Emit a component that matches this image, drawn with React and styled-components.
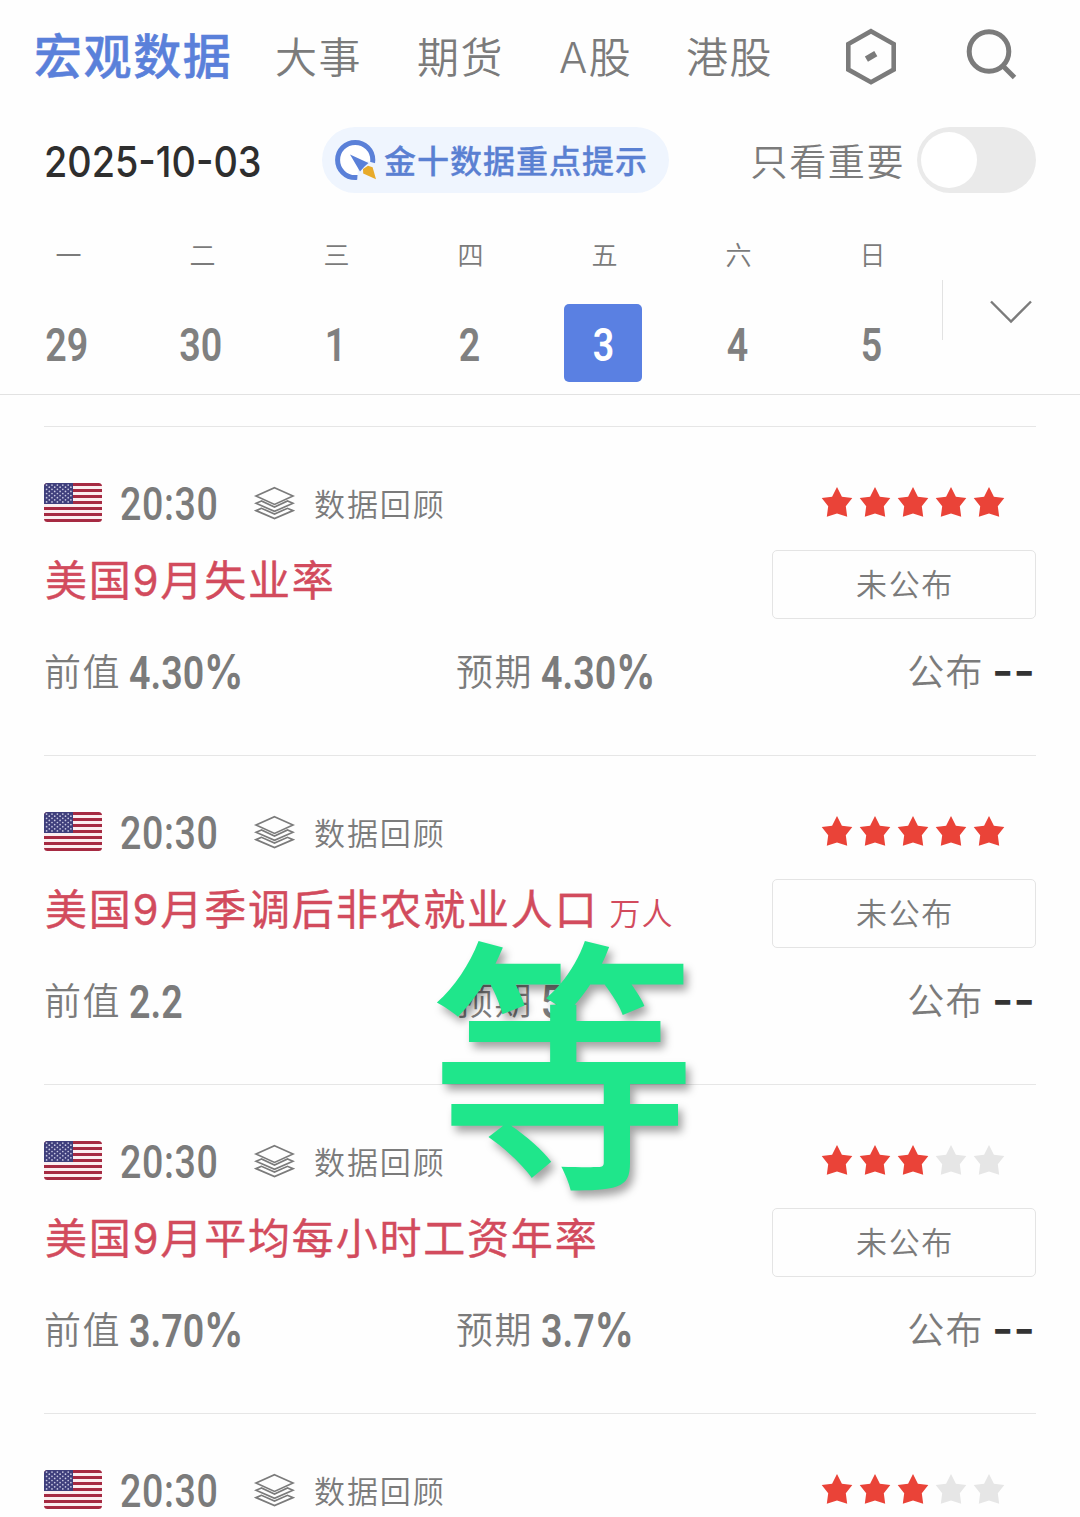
import { useState } from 'react';
import styled, { createGlobalStyle } from 'styled-components';

const GlobalStyle = createGlobalStyle`
  * {
    box-sizing: border-box;
  }

  body {
    margin: 0;
    background: #fefefe;
    color: #7b7b7b;
    font-family: 'Noto Sans CJK SC', sans-serif;
    overflow: hidden;
  }

  button {
    padding: 0;
    border: none;
    background: none;
    color: inherit;
    font-family: inherit;
    cursor: pointer;
  }

  svg {
    display: block;
    flex: none;
  }
`;

// Styled Components
const Screen = styled.div`
  position: relative;
  width: 1080px;
  height: 1517px;
  overflow: hidden;
`;

const Header = styled.header`
  height: 395px;
  border-bottom: 1px solid #e2e2e2;
`;

const TabBar = styled.nav`
  display: flex;
  align-items: center;
  height: 112px;
  padding-left: 34px;
`;

const Tab = styled.button`
  width: ${({ $width }) => $width}px;
  height: 66px;
  flex: none;
  padding-top: ${({ $active }) => ($active ? 2 : 4)}px;
  text-align: left;
  white-space: nowrap;
  font-family: Inter, 'Noto Sans CJK SC', sans-serif;
  line-height: 62px;
  font-size: ${({ $active }) => ($active ? 48 : 42)}px;
  font-weight: ${({ $active }) => ($active ? 500 : 350)};
  letter-spacing: ${({ $active }) => ($active ? 1.6 : 1.4)}px;
  color: ${({ $active }) => ($active ? '#5a80da' : '#7b7b7b')};
  -webkit-text-stroke: ${({ $active }) => ($active ? 0.5 : 0)}px;
`;

const IconButton = styled.button`
  width: 60px;
  height: 64px;
  margin-left: ${({ $gap }) => $gap}px;
`;

const FilterBar = styled.div`
  display: flex;
  align-items: center;
  height: 66px;
  margin-top: 15px;
  padding: 0 44px;
`;

const DateText = styled.div`
  width: 278px;
  padding-top: 3px;
  font-family: Inter, sans-serif;
  font-size: 42px;
  font-weight: 500;
  line-height: 66px;
  color: #2e2e2e;
  white-space: nowrap;
  transform: scaleX(0.9);
  transform-origin: left;
`;

const TipPill = styled.button`
  display: flex;
  align-items: center;
  gap: 6px;
  width: 347px;
  height: 66px;
  padding-left: 12px;
  border-radius: 33px;
  background: #eff5fe;
  color: #5a80d2;
  font-size: 32px;
  font-weight: 500;
  line-height: 64px;
  letter-spacing: 1px;
  white-space: nowrap;
  -webkit-text-stroke: 0.3px;
`;

const TipLabel = styled.span`
  height: 66px;
`;

const OnlyImportant = styled.label`
  display: flex;
  align-items: center;
  gap: 12px;
  margin-left: auto;
  font-size: 37px;
  font-weight: 350;
  line-height: 66px;
  letter-spacing: 1.6px;
`;

const Switch = styled.button`
  width: 119px;
  height: 66px;
  padding: 5px 4px;
  border-radius: 33px;
  background: #eaeaea;
`;

const Knob = styled.span`
  display: block;
  width: 56px;
  height: 56px;
  border-radius: 50%;
  background: #fff;
  transform: translateX(${({ $on }) => ($on ? 55 : 0)}px);
`;

const WeekBar = styled.div`
  display: flex;
  height: 201px;
  padding: 42px 0 0 28px;
`;

const DayCell = styled.button`
  display: flex;
  flex-direction: column;
  align-items: center;
  gap: 30px;
  width: 78px;
  margin-right: 56px;
`;

const Weekday = styled.span`
  height: 39px;
  line-height: 37px;
  font-size: 26px;
  font-weight: 350;
  padding-left: 3px;
`;

const DayNumber = styled.span`
  display: flex;
  align-items: center;
  justify-content: center;
  width: 78px;
  height: 78px;
  padding-top: 4px;
  border-radius: 5px;
  background: ${({ $selected }) => ($selected ? '#5a80e2' : 'transparent')};
  color: ${({ $selected }) => ($selected ? '#fff' : '#808080')};
`;

const Digits = styled.span`
  display: inline-block;
  font-family: Roboto, sans-serif;
  font-size: 47px;
  font-weight: ${({ $weight }) => $weight || 600};
  line-height: 54px;
  letter-spacing: ${({ $spacing }) => $spacing || 0}px;
  white-space: nowrap;
  transform: scaleX(0.8);
  transform-origin: ${({ $origin }) => $origin || 'left'};
`;

const Percent = styled.span`
  margin-left: 0;
  font-family: Inter, sans-serif;
  font-size: 48px;
  font-weight: 700;
  line-height: 1;
`;

const ExpandButton = styled.button`
  display: flex;
  align-items: center;
  width: 110px;
  height: 60px;
  margin: 45px 0 0 -24px;
  padding: 3px 0 0 47px;
  border-left: 1px solid #e2e2e2;
`;

const EventList = styled.main`
  padding: 31px 44px 0;
`;

const EventItem = styled.article`
  height: 329px;
  padding-top: 51px;
  border-top: 1px solid #e6e6e6;
`;

const EventHead = styled.div`
  display: flex;
  align-items: center;
  height: 48px;
`;

const Time = styled.div`
  width: 134px;
  margin-left: 18px;
  padding-top: 3px;
`;

const Review = styled.span`
  height: 48px;
  margin-left: 19px;
  font-size: 31px;
  font-weight: 350;
  line-height: 49px;
  letter-spacing: 1.9px;
`;

const Stars = styled.div`
  display: flex;
  gap: 6px;
  margin: 0 31px 0 auto;
`;

const EventBody = styled.div`
  display: flex;
  justify-content: space-between;
  height: 69px;
  margin-top: 24px;
`;

const Title = styled.h3`
  margin: 0 0 0 1px;
  font-family: Inter, 'Noto Sans CJK SC', sans-serif;
  font-size: 42px;
  font-weight: 400;
  line-height: 62px;
  letter-spacing: 1.8px;
  color: #d24b5d;
  white-space: nowrap;
  -webkit-text-stroke: 0.4px;
`;

const Unit = styled.small`
  margin-left: 11px;
  font-size: 31px;
  font-weight: 350;
  line-height: 1;
  letter-spacing: 1px;
  -webkit-text-stroke: 0;
`;

const StatusBox = styled.div`
  width: 264px;
  height: 69px;
  padding-left: 2px;
  border: 1px solid #e4e4e4;
  border-radius: 5px;
  text-align: center;
  font-size: 31px;
  font-weight: 350;
  line-height: 64px;
  letter-spacing: 1.6px;
`;

const Values = styled.div`
  display: grid;
  grid-template-columns: 412px 1fr auto;
  height: 60px;
  margin-top: 21px;
`;

const Value = styled.div`
  display: flex;
  align-items: center;
  gap: 8px;
  height: 60px;
`;

const ValueLabel = styled.span`
  font-size: 37px;
  font-weight: 350;
  line-height: 54px;
  letter-spacing: 1.4px;
`;

const ValueNumber = styled.div`
  padding-top: 5px;
`;

const Pending = styled.span`
  display: flex;
  width: 44px;
  font-family: Inter, sans-serif;
  font-size: 46px;
  font-weight: 600;
  line-height: 54px;
  color: #333;
`;

const Sticker = styled.div`
  position: absolute;
  left: 430px;
  top: 927px;
  font-size: 267px;
  font-weight: 500;
  line-height: 250px;
  color: #1fe68b;
  text-shadow: 4px 6px 9px rgba(0, 0, 0, 0.36);
  pointer-events: none;
`;

// Icons
const HexIcon = () => (
  <svg width="60" height="64" viewBox="0 0 60 64" fill="none" stroke="#7b7b7b">
    <path d="M30 7.2 52.7 20v25.6L30 58.2 7.3 45.6V20z" strokeWidth="4.6" />
    <path d="M25.4 35.2 34.8 29.6" strokeWidth="6" />
  </svg>
);

const SearchIcon = () => (
  <svg width="60" height="64" viewBox="0 0 60 64" fill="none" stroke="#7b7b7b" strokeWidth="5">
    <circle cx="29" cy="27.5" r="19.8" />
    <path d="M42 41 54.5 53.5" />
  </svg>
);

const CompassIcon = () => (
  <svg width="44" height="44" viewBox="0 0 44 44">
    <circle cx="21.2" cy="22" r="17.6" fill="#fff" stroke="#5a80d8" strokeWidth="5" />
    <path d="M23 44 24 31 33 23 44 26V44z" fill="#eff5fe" />
    <path d="m16 16.5 18.5 8.5-4 3.5-4.5 5z" fill="#5a80d8" />
    <path d="m29 31 5-3.2 4.6 1.4 3.4 12-12.8-5.8z" fill="#e8ab2b" />
  </svg>
);

const ChevronIcon = () => (
  <svg width="42" height="24" viewBox="0 0 42 24" fill="none" stroke="#7b7b7b" strokeWidth="2.4">
    <path d="M1 1.5 21 21.5 41 1.5" />
  </svg>
);

const LayersIcon = () => (
  <svg width="41" height="36" viewBox="0 -2 41 36" fill="none" stroke="#7b7b7b" strokeWidth="1.7">
    <path d="M20.5 1.8 39 10 20.5 18.4 2 10z" />
    <path d="M7.5 15 2 17.3 20.5 25.4 39 17.3 33.5 15 20.5 21z" />
    <path d="M7.5 22.3 2 24.6 20.5 32.5 39 24.6 33.5 22.3 20.5 28z" />
  </svg>
);

const StarIcon = ({ filled }) => (
  <svg width="32" height="32" viewBox="0 0 32 32">
    <path
      d="m16 1 4.9 9.8L31.3 12l-6.5 8.2 1.4 10.6L16 27.6 5.8 30.8l1.4-10.6L.7 12l10.4-1.2z"
      fill={filled ? '#ea4338' : '#e6e6e6'}
    />
  </svg>
);

const stripes = [0, 2, 4, 6, 8, 10, 12];
const dots = Array.from({ length: 45 }, (_, i) => i);

const FlagIcon = () => (
  <svg width="58" height="39" viewBox="0 0 58 39">
    <clipPath id="flag">
      <rect width="58" height="39" rx="3.5" />
    </clipPath>
    <g clipPath="url(#flag)">
      <rect width="58" height="39" fill="#fbeef0" />
      {stripes.map((n) => (
        <rect key={n} y={n * 3} width="58" height="3" fill="#a62a42" />
      ))}
      <rect width="29" height="21" fill="#3f3f7c" />
      {dots.map((n) => {
        const row = Math.floor(n / 5);
        return (
          <circle
            key={n}
            cx={2.6 + (n % 5) * 5.4 + (row % 2) * 2.7}
            cy={2.1 + row * 2.1}
            r="0.85"
            fill="#c9c9e2"
          />
        );
      })}
    </g>
  </svg>
);

const tabs = [
  { label: '宏观数据', width: 241 },
  { label: '大事', width: 142 },
  { label: '期货', width: 142 },
  { label: 'A股', width: 127 },
  { label: '港股', width: 100 },
];

const days = [
  ['一', 29],
  ['二', 30],
  ['三', 1],
  ['四', 2],
  ['五', 3],
  ['六', 4],
  ['日', 5],
];

const events = [
  { title: '美国9月失业率', stars: 5, previous: '4.30%', forecast: '4.30%' },
  { title: '美国9月季调后非农就业人口', unit: '万人', stars: 5, previous: '2.2', forecast: '5' },
  { title: '美国9月平均每小时工资年率', stars: 3, previous: '3.70%', forecast: '3.7%' },
  { title: '', stars: 3 },
];

const Figure = ({ label, value }) => (
  <Value>
    <ValueLabel>{label}</ValueLabel>
    <ValueNumber>
      <Digits>
        {value.replace('%', '')}
        {value.endsWith('%') && <Percent>%</Percent>}
      </Digits>
    </ValueNumber>
  </Value>
);

const EventCard = ({ event }) => (
  <EventItem>
    <EventHead>
      <FlagIcon />
      <Time>
        <Digits $weight={500} $spacing={0.8}>
          20:30
        </Digits>
      </Time>
      <LayersIcon />
      <Review>数据回顾</Review>
      <Stars>
        {[1, 2, 3, 4, 5].map((n) => (
          <StarIcon key={n} filled={n <= event.stars} />
        ))}
      </Stars>
    </EventHead>
    {event.title && (
      <>
        <EventBody>
          <Title>
            {event.title}
            {event.unit && <Unit>{event.unit}</Unit>}
          </Title>
          <StatusBox>未公布</StatusBox>
        </EventBody>
        <Values>
          <Figure label="前值" value={event.previous} />
          <Figure label="预期" value={event.forecast} />
          <Value>
            <ValueLabel>公布</ValueLabel>
            <Pending>--</Pending>
          </Value>
        </Values>
      </>
    )}
  </EventItem>
);

const App = () => {
  const [activeTab, setActiveTab] = useState('宏观数据');
  const [selectedDay, setSelectedDay] = useState(3);
  const [onlyImportant, setOnlyImportant] = useState(false);

  return (
    <Screen>
      <GlobalStyle />
      <Header>
        <TabBar>
          {tabs.map(({ label, width }) => (
            <Tab
              key={label}
              $width={width}
              $active={label === activeTab}
              onClick={() => setActiveTab(label)}
            >
              {label}
            </Tab>
          ))}
          <IconButton $gap={55}>
            <HexIcon />
          </IconButton>
          <IconButton $gap={59}>
            <SearchIcon />
          </IconButton>
        </TabBar>
        <FilterBar>
          <DateText>2025-10-03</DateText>
          <TipPill>
            <CompassIcon />
            <TipLabel>金十数据重点提示</TipLabel>
          </TipPill>
          <OnlyImportant>
            只看重要
            <Switch onClick={() => setOnlyImportant(!onlyImportant)}>
              <Knob $on={onlyImportant} />
            </Switch>
          </OnlyImportant>
        </FilterBar>
        <WeekBar>
          {days.map(([weekday, day]) => (
            <DayCell key={day} onClick={() => setSelectedDay(day)}>
              <Weekday>{weekday}</Weekday>
              <DayNumber $selected={day === selectedDay}>
                <Digits $origin="center">{day}</Digits>
              </DayNumber>
            </DayCell>
          ))}
          <ExpandButton>
            <ChevronIcon />
          </ExpandButton>
        </WeekBar>
      </Header>
      <EventList>
        {events.map((event, index) => (
          <EventCard key={index} event={event} />
        ))}
      </EventList>
      <Sticker>等</Sticker>
    </Screen>
  );
};

export default App;
